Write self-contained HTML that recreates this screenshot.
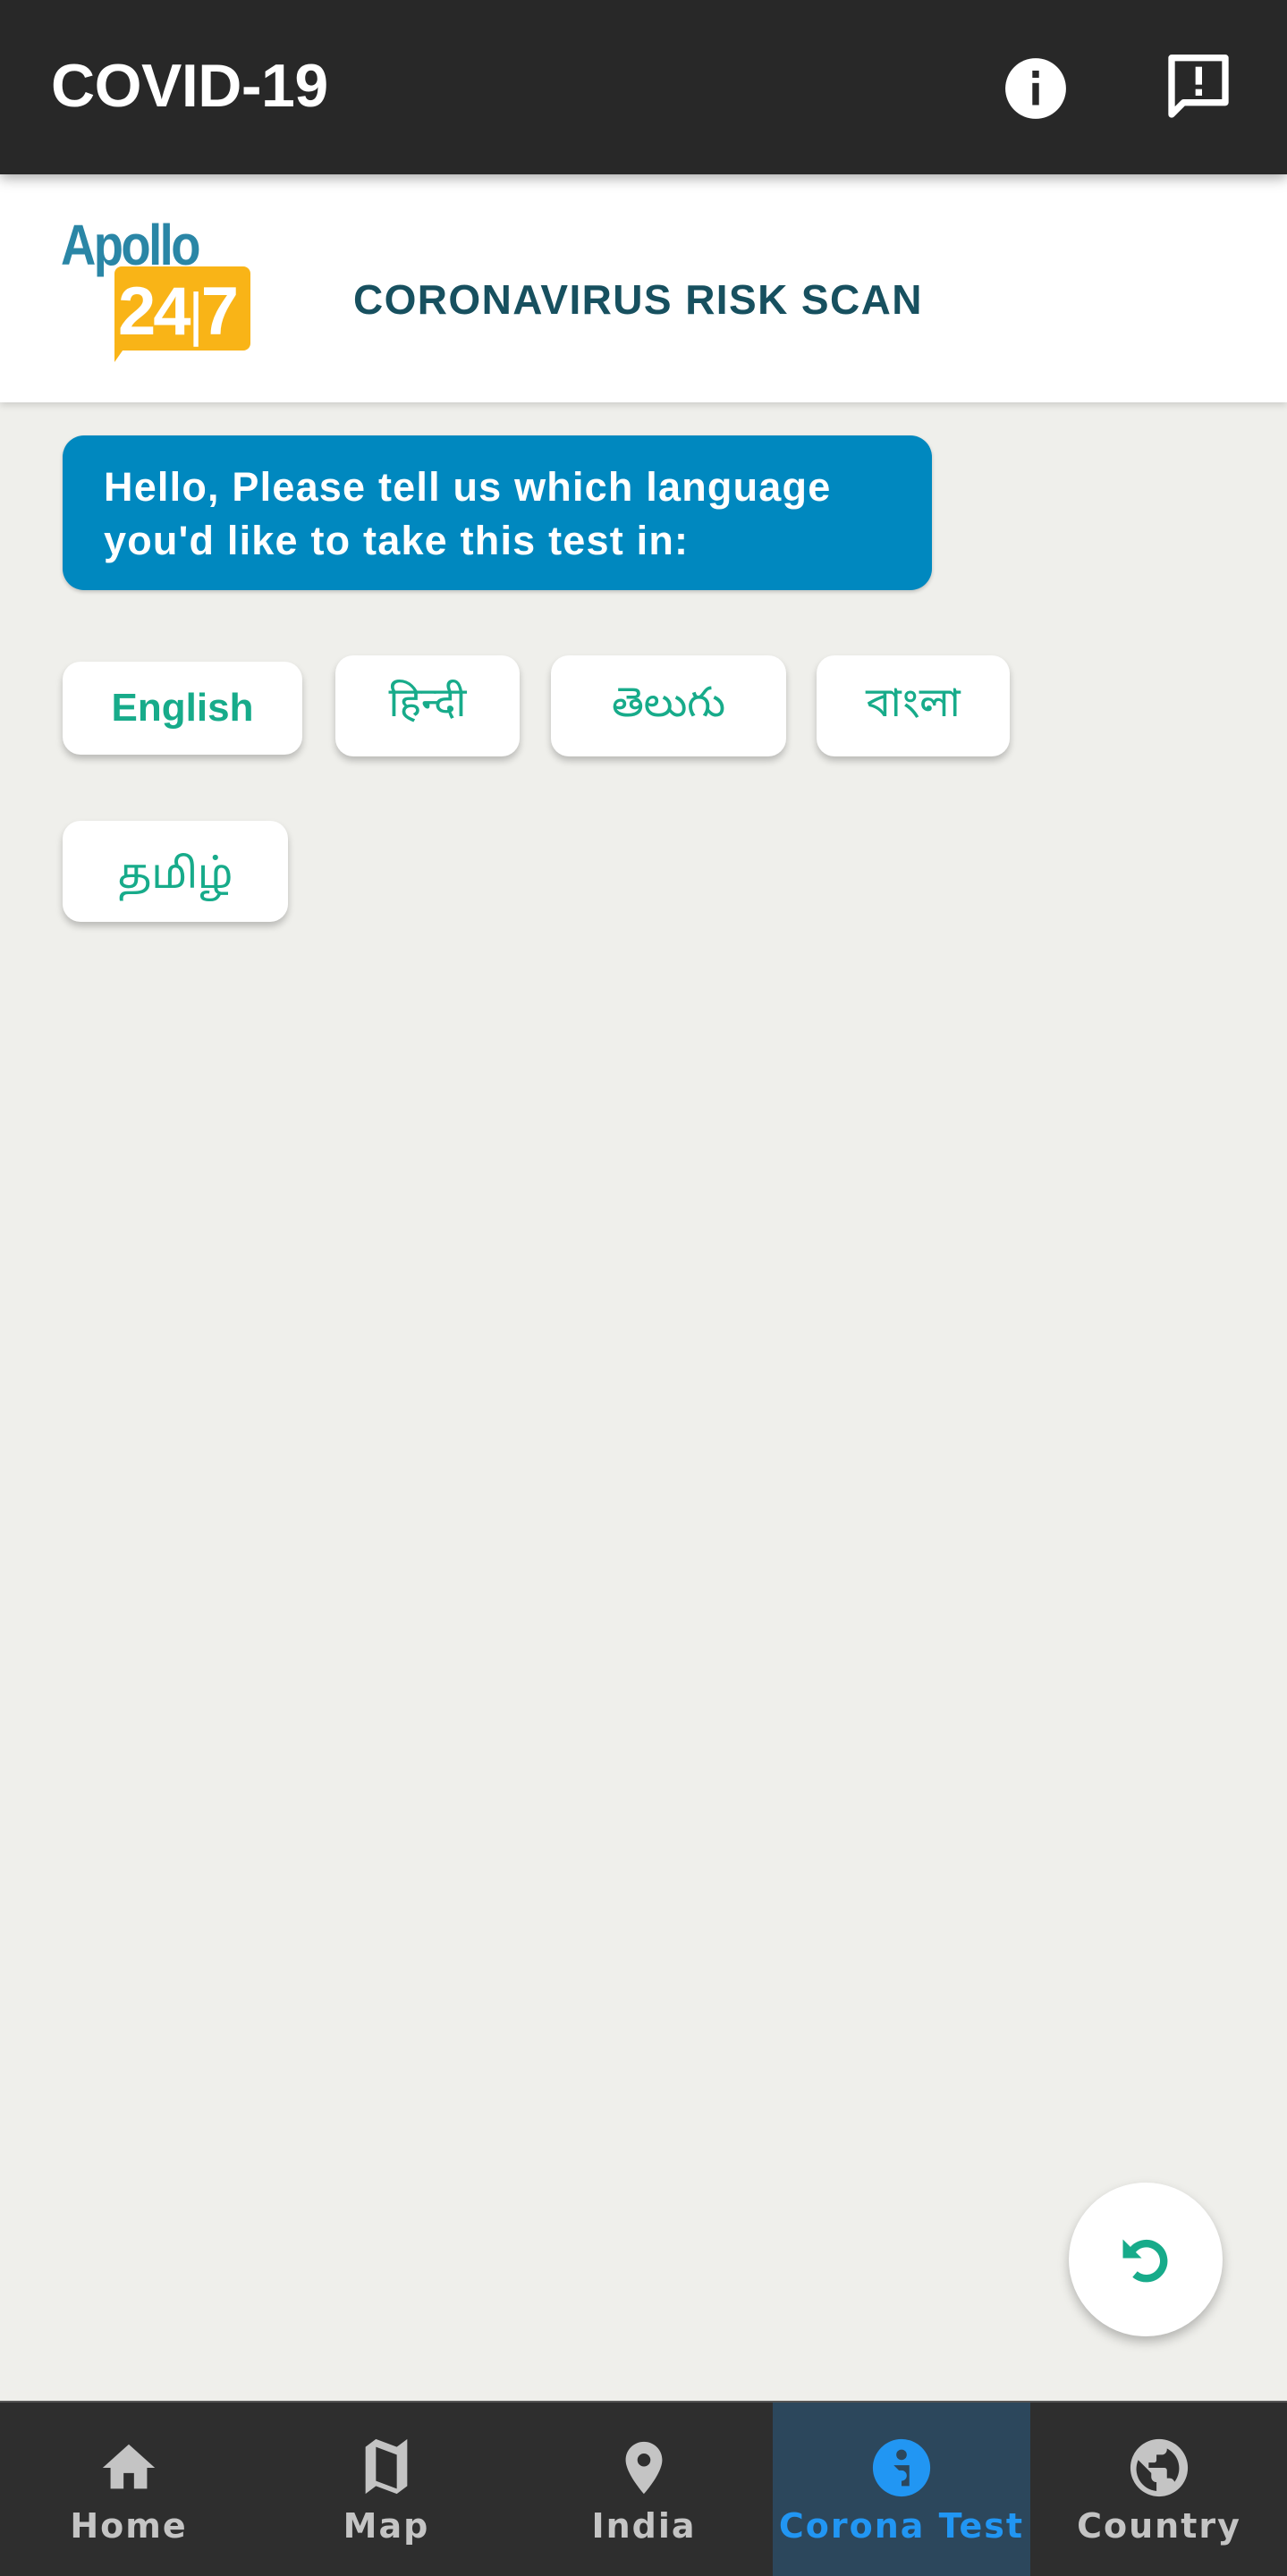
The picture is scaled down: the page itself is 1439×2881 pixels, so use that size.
<!DOCTYPE html>
<html><head><meta charset="utf-8">
<style>
*{margin:0;padding:0;box-sizing:border-box}
html,body{width:1439px;height:2881px;overflow:hidden;background:#efefeb;font-family:"Liberation Sans",sans-serif;position:relative}
.top{position:absolute;left:0;top:0;width:1439px;height:195px;background:#282828;box-shadow:0 4px 14px rgba(0,0,0,.35);z-index:3}
.top h1{position:absolute;left:57px;top:58px;font-size:68px;font-weight:bold;color:#fff;letter-spacing:-0.5px;line-height:76px}
.hdr{position:absolute;left:0;top:195px;width:1439px;height:255px;background:#fff;box-shadow:0 3px 8px rgba(0,0,0,.15);z-index:2}
.hdr .t{position:absolute;left:395px;top:113px;font-size:46px;font-weight:bold;color:#17505f;letter-spacing:1.4px}
.bub{position:absolute;left:70px;top:487px;width:972px;height:173px;background:#0088bf;border-radius:24px;color:#fff;font-weight:bold;font-size:45px;line-height:60px;padding:28px 0 0 46px;letter-spacing:1.2px;box-shadow:0 2px 4px rgba(0,0,0,.2)}
.b{position:absolute;background:#fff;border-radius:20px;box-shadow:0 5px 8px rgba(0,0,0,.22);color:#17ab8a;font-size:46px;text-align:center;font-family:"Liberation Sans","Noto Sans Devanagari","Noto Sans Telugu","Noto Sans Bengali","Noto Sans Tamil",sans-serif}
.fab{position:absolute;left:1195px;top:2441px;width:172px;height:172px;border-radius:50%;background:#fff;box-shadow:0 6px 12px rgba(0,0,0,.25)}
.nav{position:absolute;left:0;top:2685px;width:1439px;height:196px;background:#2e2e2e;border-top:2px solid #555}
.tab{position:absolute;top:0;width:288px;height:196px;text-align:center;color:#c4c4c4}
.tab svg{position:absolute;left:109px;top:38px}
.tab span{position:absolute;left:0;right:0;top:116px;letter-spacing:2px;font-family:"DejaVu Sans","Liberation Sans",sans-serif;font-weight:bold;font-size:38px}
</style></head><body>
<div class="top"><h1>COVID-19</h1>
<svg style="position:absolute;left:1121px;top:62px" width="74" height="74" viewBox="0 0 24 24"><circle cx="12" cy="12" r="11" fill="#fff"/><rect x="10.8" y="10" width="2.4" height="8" fill="#282828"/><rect x="10.8" y="5.5" width="2.4" height="2.6" fill="#282828"/></svg>
<svg style="position:absolute;left:1300px;top:58px" width="80" height="80" viewBox="0 0 24 24"><path d="M3 2h18v15H7l-4 4z" fill="none" stroke="#fff" stroke-width="2.2" stroke-linejoin="round"/><rect x="11" y="5" width="2.2" height="6" fill="#fff"/><rect x="11" y="12.5" width="2.2" height="2.2" fill="#fff"/></svg>
</div>
<div class="hdr">
<div style="position:absolute;left:68px;top:42px;font-size:64px;color:#2a86a6;letter-spacing:-3px;font-weight:bold;transform:scaleX(.85);transform-origin:left">Apollo</div>
<div style="position:absolute;left:128px;top:103px;width:152px;height:94px;background:#f9b417;border-radius:8px"></div>
<div style="position:absolute;left:128px;top:190px;width:0;height:0;border-left:14px solid #f9b417;border-bottom:20px solid transparent"></div>
<div style="position:absolute;left:132px;top:110px;font-size:76px;color:#fff;font-weight:bold;letter-spacing:-3px">24<span style="font-weight:normal;font-size:66px">|</span>7</div>
<div class="t">CORONAVIRUS RISK SCAN</div>
</div>
<div class="bub">Hello, Please tell us which language<br>you'd like to take this test in:</div>
<div class="b" style="left:70px;top:740px;width:268px;height:104px;line-height:104px;font-weight:bold;font-size:44px">English</div>
<div class="b" style="left:375px;top:733px;width:206px;height:113px;line-height:104px">हिन्दी</div>
<div class="b" style="left:616px;top:733px;width:263px;height:113px;line-height:104px">తెలుగు</div>
<div class="b" style="left:913px;top:733px;width:216px;height:113px;line-height:104px">বাংলা</div>
<div class="b" style="left:70px;top:918px;width:252px;height:113px;line-height:118px">தமிழ்</div>
<div class="fab"><svg style="position:absolute;left:50px;top:50px" width="72" height="72" viewBox="0 0 24 24"><path d="M6.5 9.5A6.5 6.5 0 1 1 8 17.5" fill="none" stroke="#17ab8a" stroke-width="2.8"/><path d="M3.5 4.5v7h7z" fill="#17ab8a"/></svg></div>
<div class="nav">
<div class="tab" style="left:0"><svg width="70" height="70" viewBox="0 0 24 24"><path d="M10 20v-6h4v6h5v-8h3L12 3 2 12h3v8z" fill="#c4c4c4"/></svg><span>Home</span></div>
<div class="tab" style="left:288px"><svg width="70" height="70" viewBox="0 0 24 24"><path d="M4 4l4-3 8 3 4-3v18l-4 3-8-3-4 3z M8 4v13l8 3V7z" fill="#c4c4c4" fill-rule="evenodd"/></svg><span>Map</span></div>
<div class="tab" style="left:576px"><svg width="70" height="70" viewBox="0 0 24 24"><path d="M12 2C8.1 2 5 5.1 5 9c0 5.2 7 13 7 13s7-7.8 7-13c0-3.9-3.1-7-7-7zm0 9.5a2.5 2.5 0 1 1 0-5 2.5 2.5 0 0 1 0 5z" fill="#c4c4c4"/></svg><span>India</span></div>
<div class="tab" style="left:864px;background:#2c475c;color:#2196f3"><svg width="70" height="70" viewBox="0 0 24 24"><circle cx="12" cy="12" r="11" fill="#2196f3"/><circle cx="12" cy="7" r="2" fill="#2c475c"/><path d="M9 11h6v8h-3v-2a2 2 0 0 0 0-4h-1z" fill="#2c475c"/></svg><span>Corona Test</span></div>
<div class="tab" style="left:1152px"><svg width="70" height="70" viewBox="0 0 24 24"><path d="M12 1a11 11 0 1 0 0 22 11 11 0 0 0 0-22zM4 9l5 5v1.5c0 1.1.9 2 2 2v3.4A8.5 8.5 0 0 1 4 9zm13.9 8.4c-.3-.8-1-1.4-1.9-1.4h-1v-3c0-.6-.4-1-1-1H8v-2h2c.6 0 1-.4 1-1V7h2c1.1 0 2-.9 2-2v-.4a8.5 8.5 0 0 1 2.9 12.8z" fill="#c4c4c4"/></svg><span>Country</span></div>
</div>
</body></html>
